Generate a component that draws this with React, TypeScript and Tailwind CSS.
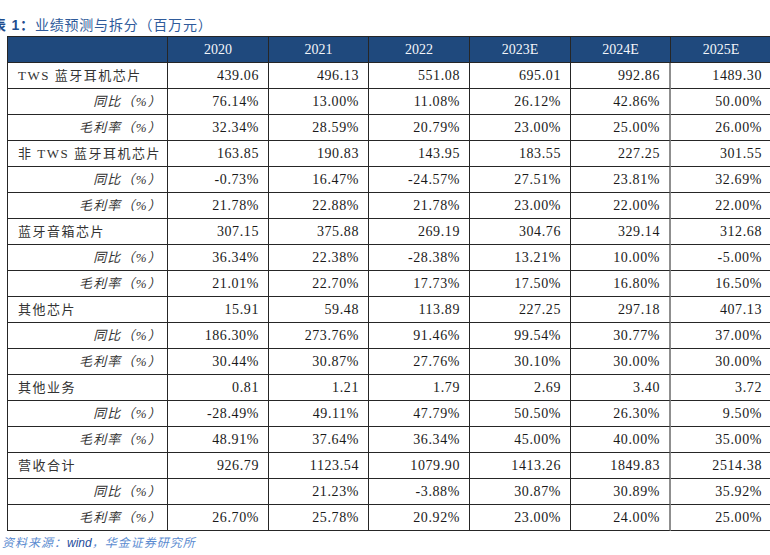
const rows: { label: string; sub?: boolean; values: string[] }[] = [
  { label: "TWS 蓝牙耳机芯片", values: ["439.06", "496.13", "551.08", "695.01", "992.86", "1489.30"] },
  { label: "同比（%）", sub: true, values: ["76.14%", "13.00%", "11.08%", "26.12%", "42.86%", "50.00%"] },
  { label: "毛利率（%）", sub: true, values: ["32.34%", "28.59%", "20.79%", "23.00%", "25.00%", "26.00%"] },
  { label: "非 TWS 蓝牙耳机芯片", values: ["163.85", "190.83", "143.95", "183.55", "227.25", "301.55"] },
  { label: "同比（%）", sub: true, values: ["-0.73%", "16.47%", "-24.57%", "27.51%", "23.81%", "32.69%"] },
  { label: "毛利率（%）", sub: true, values: ["21.78%", "22.88%", "21.78%", "23.00%", "22.00%", "22.00%"] },
  { label: "蓝牙音箱芯片", values: ["307.15", "375.88", "269.19", "304.76", "329.14", "312.68"] },
  { label: "同比（%）", sub: true, values: ["36.34%", "22.38%", "-28.38%", "13.21%", "10.00%", "-5.00%"] },
  { label: "毛利率（%）", sub: true, values: ["21.01%", "22.70%", "17.73%", "17.50%", "16.80%", "16.50%"] },
  { label: "其他芯片", values: ["15.91", "59.48", "113.89", "227.25", "297.18", "407.13"] },
  { label: "同比（%）", sub: true, values: ["186.30%", "273.76%", "91.46%", "99.54%", "30.77%", "37.00%"] },
  { label: "毛利率（%）", sub: true, values: ["30.44%", "30.87%", "27.76%", "30.10%", "30.00%", "30.00%"] },
  { label: "其他业务", values: ["0.81", "1.21", "1.79", "2.69", "3.40", "3.72"] },
  { label: "同比（%）", sub: true, values: ["-28.49%", "49.11%", "47.79%", "50.50%", "26.30%", "9.50%"] },
  { label: "毛利率（%）", sub: true, values: ["48.91%", "37.64%", "36.34%", "45.00%", "40.00%", "35.00%"] },
  { label: "营收合计", values: ["926.79", "1123.54", "1079.90", "1413.26", "1849.83", "2514.38"] },
  { label: "同比（%）", sub: true, values: ["", "21.23%", "-3.88%", "30.87%", "30.89%", "35.92%"] },
  { label: "毛利率（%）", sub: true, values: ["26.70%", "25.78%", "20.92%", "23.00%", "24.00%", "25.00%"] },
];

const years = ["2020", "2021", "2022", "2023E", "2024E", "2025E"];

const App = () => {
  return (
    <div className="w-[770px] h-[555px] overflow-hidden bg-white pt-[15px] font-['Liberation_Serif','Noto_Sans_CJK_SC',serif] text-[#1a1a1a]">
      {/* title, cut off at the left edge */}
      <div className="-ml-[8px] h-[21px] leading-[21px] text-[14px] text-[#2f5b9b] font-['Liberation_Sans','Noto_Sans_CJK_SC',sans-serif] tracking-[0.8px] whitespace-nowrap">
        <span className="font-bold text-[#1f4e8f]">表 1：</span>
        业绩预测与拆分（百万元）
      </div>

      {/* table */}
      <div className="ml-[7px] w-[764px] grid grid-cols-[160px_101px_100px_101px_101px_100px_101px] border-l border-t border-[#262626]">
        <div className="h-[26px] bg-[#1f497d] border-r border-b border-[#262626]" />
        {years.map((y) => (
          <div
            key={y}
            className="h-[26px] bg-[#1f497d] border-r border-b border-[#262626] flex items-center justify-center text-[#f4f6fa] text-[14px]"
          >
            {y}
          </div>
        ))}

        {rows.map((row, i) => (
          <div key={i} className="contents">
            <div
              className={
                row.sub
                  ? "h-[26px] border-r border-b border-[#262626] flex items-center justify-end pr-[5px] text-[13px] text-[#333] italic tracking-[1.2px] whitespace-nowrap"
                  : "h-[26px] border-r border-b border-[#262626] flex items-center pl-[10px] text-[13px] text-[#333] tracking-[1.5px] whitespace-nowrap"
              }
            >
              {row.label}
            </div>
            {row.values.map((v, j) => (
              <div
                key={j}
                className={
                  j === 4
                    ? "h-[26px] border-r-2 border-r-[#8f8f8f] border-b border-[#262626] flex items-center justify-end pr-[9px] text-[14px] tracking-[0.6px]"
                    : "h-[26px] border-r border-b border-[#262626] flex items-center justify-end pr-[9px] text-[14px] tracking-[0.6px]"
                }
              >
                {v}
              </div>
            ))}
          </div>
        ))}
      </div>

      {/* source */}
      <div className="ml-[2px] mt-[4px] text-[12px] leading-[16px] italic text-[#5b8bd0] font-['Liberation_Sans','Noto_Sans_CJK_SC',sans-serif] tracking-[1px] whitespace-nowrap">
        资料来源：<span className="text-[#1f4e9c] tracking-normal">wind</span>，华金证券研究所
      </div>
    </div>
  );
};

export default App;
